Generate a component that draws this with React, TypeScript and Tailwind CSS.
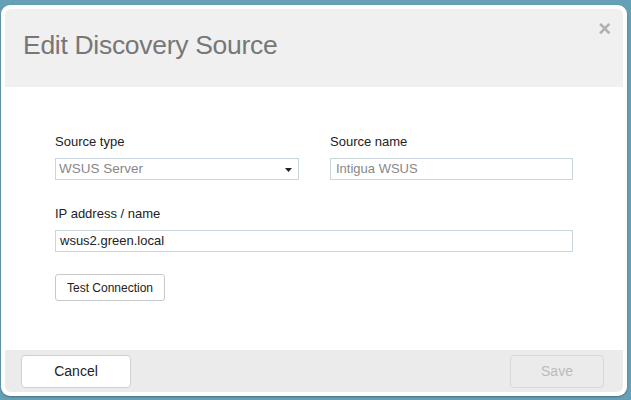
const font = { fontFamily: '"Liberation Sans", Arial, sans-serif' };

function Field({ label, children }: { label: string; children: React.ReactNode }) {
  return (
    <div className="flex flex-col">
      <label className="text-[13px] leading-4 text-[#222] h-4 mb-2">{label}</label>
      {children}
    </div>
  );
}

export default function App() {
  return (
    <div className="w-[631px] h-[400px] bg-[#66a0b6] pt-[5px] pl-px" style={font}>
      <div className="w-[626px] h-[391px] bg-white rounded-[9px] p-1 flex flex-col shadow-[0_1px_2px_rgba(0,0,0,0.3)]">
        {/* header */}
        <div className="h-[78px] bg-[#f0f0f0] rounded-t-[6px] relative pl-[18px] pt-[20px]">
          <h2 className="text-[26.5px] leading-8 text-[#777] tracking-[-0.3px]">Edit Discovery Source</h2>
          <span className="absolute right-[12px] top-[8px] text-[22px] font-bold leading-6 text-[#b0b0b0]">×</span>
        </div>

        {/* body */}
        <div className="flex-1 pt-[47px] px-[50px]">
          <div className="grid grid-cols-[244px_243px] gap-x-[31px]">
            <Field label="Source type">
              <div className="h-[22px] border border-[#c9d6db] flex items-center justify-between pl-[3px] pr-[6px] text-[13.5px] text-[#888]">
                <span>WSUS Server</span>
                <svg width="7" height="4" viewBox="0 0 7 4" className="mt-px">
                  <path d="M0 0h7L3.5 4z" fill="#222" />
                </svg>
              </div>
            </Field>
            <Field label="Source name">
              <div className="h-[22px] border border-[#c9d6db] flex items-center pl-[5px] text-[13px] text-[#888]">
                Intigua WSUS
              </div>
            </Field>
          </div>

          <div className="mt-[26px]">
            <Field label="IP address / name">
              <div className="h-[22px] border border-[#c9d6db] flex items-center pl-[4px] text-[13px] text-[#222]">
                wsus2.green.local
              </div>
            </Field>
          </div>

          <button className="mt-[22px] w-[110px] h-[27px] border border-[#c8c8c8] rounded-[3px] bg-white text-[12px] text-[#222]">
            Test Connection
          </button>
        </div>

        {/* footer */}
        <div className="h-[42px] bg-[#ebebeb] rounded-b-[6px] flex items-start justify-between pt-[5px] pl-[16px] pr-[19px]">
          <button className="w-[110px] h-[33px] bg-white border border-[#cfcfcf] rounded-[4px] text-[14px] text-[#222]">
            Cancel
          </button>
          <button className="w-[94px] h-[33px] bg-[#ebebeb] border border-[#d8d8d8] rounded-[4px] text-[14px] text-[#bbb]">
            Save
          </button>
        </div>
      </div>
    </div>
  );
}
